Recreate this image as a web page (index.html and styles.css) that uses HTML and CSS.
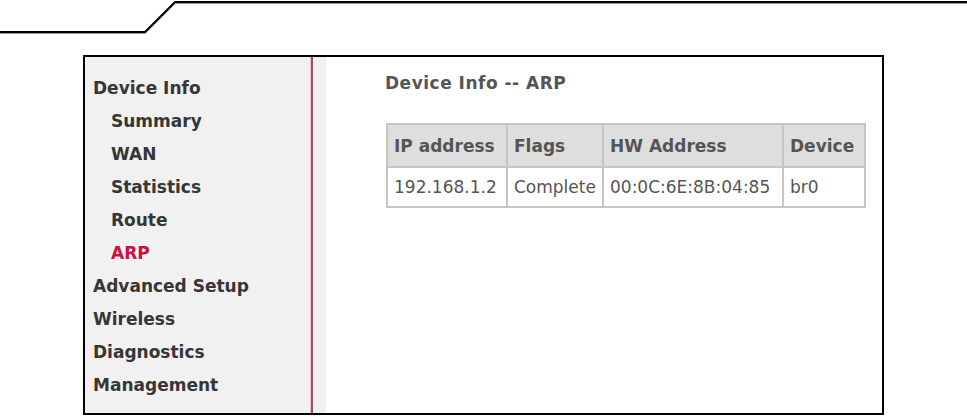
FILE: index.html
```html
<!DOCTYPE html>
<html lang="en">
<head>
<meta charset="utf-8">
<title>Device Info -- ARP</title>
<link rel="stylesheet" href="styles.css">
</head>
<body>
<div class="topbar">
  <svg class="topline" width="967" height="40" viewBox="0 0 967 40" xmlns="http://www.w3.org/2000/svg">
    <polyline points="0,33.2 145,33.2 175,3.2 967,3.2" fill="none" stroke="#9a9a9a" stroke-width="1.6"/>
    <polyline points="0,32 145,32 175,2 967,2" fill="none" stroke="#000" stroke-width="1.8"/>
  </svg>
</div>
<div class="frame">
  <nav class="menu">
    <a class="item">Device Info</a>
    <a class="item sub">Summary</a>
    <a class="item sub">WAN</a>
    <a class="item sub">Statistics</a>
    <a class="item sub">Route</a>
    <a class="item sub active">ARP</a>
    <a class="item">Advanced Setup</a>
    <a class="item">Wireless</a>
    <a class="item">Diagnostics</a>
    <a class="item">Management</a>
  </nav>
  <div class="divider"></div>
  <div class="gutter"></div>
  <main class="main">
    <h1 class="title">Device Info -- ARP</h1>
    <table class="arp">
      <colgroup>
        <col class="c1"><col class="c2"><col class="c3"><col class="c4">
      </colgroup>
      <thead>
        <tr><th>IP address</th><th>Flags</th><th>HW Address</th><th>Device</th></tr>
      </thead>
      <tbody>
        <tr><td>192.168.1.2</td><td>Complete</td><td>00:0C:6E:8B:04:85</td><td>br0</td></tr>
      </tbody>
    </table>
  </main>
</div>
</body>
</html>
```

FILE: styles.css
```css
html, body {
  margin: 0;
  padding: 0;
  background: #fff;
}
body {
  width: 967px;
  height: 417px;
  overflow: hidden;
  font-family: "DejaVu Sans", Verdana, sans-serif;
}
.topbar {
  height: 55px;
}
.topline {
  display: block;
}
.frame {
  margin-left: 83px;
  width: 797px;
  height: 356px;
  border: 2px solid #000;
  display: grid;
  grid-template-columns: 226px 2px 13px 1fr;
  background: #fff;
}
.menu {
  background: #f1f1f1;
  padding: 15px 0 0 8px;
  display: flex;
  flex-direction: column;
}
.item {
  font-size: 17px;
  font-weight: bold;
  line-height: 33px;
  color: #363636;
  text-decoration: none;
  white-space: nowrap;
}
.item.sub {
  padding-left: 18px;
}
.item.active {
  color: #cc1144;
}
.divider {
  background: #94506a;
  box-shadow: -1px 0 0 #efc4d2, 1px 0 0 #efc4d2;
}
.gutter {
  background: #f1f1f1;
}
.main {
  padding: 16px 0 0 59px;
}
.title {
  margin: 0 0 30px 0;
  font-size: 17px;
  line-height: 20px;
  font-weight: bold;
  color: #555;
  letter-spacing: 0.5px;
}
.arp {
  border-collapse: collapse;
  table-layout: fixed;
  width: 478px;
  margin-left: 1px;
  font-size: 17px;
  color: #555;
}
.arp col.c1 { width: 120px; }
.arp col.c2 { width: 96px; }
.arp col.c3 { width: 180px; }
.arp col.c4 { width: 82px; }
.arp th, .arp td {
  border: 2px solid #c6c6be;
  text-align: left;
  padding: 0 0 0 6px;
  white-space: nowrap;
  overflow: hidden;
}
.arp th {
  background: #dedede;
  font-weight: bold;
  height: 41px;
}
.arp td {
  background: #fff;
  font-weight: normal;
  height: 38px;
}
```
